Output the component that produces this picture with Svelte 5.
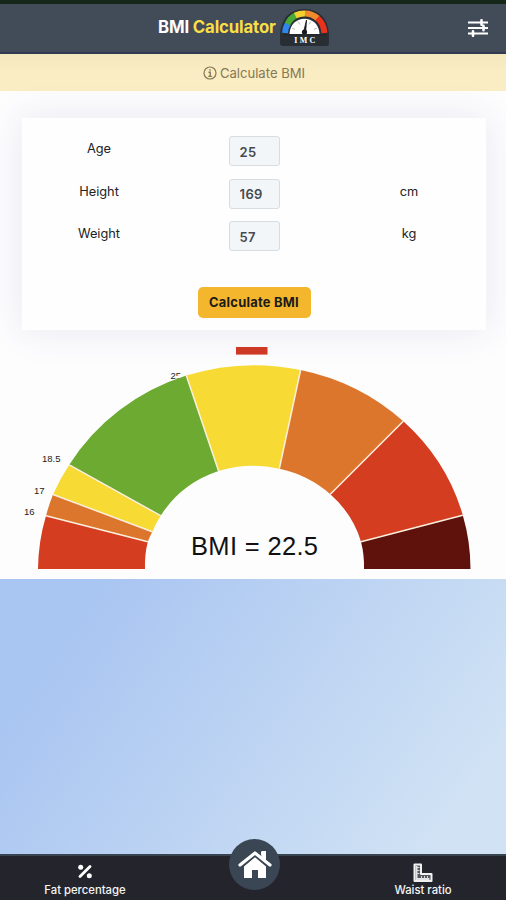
<script lang="ts">
  interface Point { x: number; y: number }
  interface Edge { outer: Point; inner: Point }

  let age = $state('25');
  let height = $state('169');
  let weight = $state('57');
  let bmi = $state('22.5');

  const colors = ['#d43d20', '#dd762d', '#f7da34', '#6daa32', '#f7da34', '#dd762d', '#d43d20', '#5f110b'];

  // Dividers between the BMI ranges, left to right.
  const edges: Edge[] = [
    [38, 229, 145, 229],
    [46, 175.7, 147.8, 201.7],
    [53, 154.5, 152.3, 191.7],
    [69.3, 124.8, 160.7, 175.7],
    [186.3, 35.6, 218.6, 131],
    [300.6, 30, 279.3, 128.8],
    [403.3, 81.3, 330.3, 154.3],
    [462.8, 175.2, 361, 201.7],
    [470.5, 229, 364, 229],
  ].map(([a, b, c, d]) => ({ outer: { x: a, y: b }, inner: { x: c, y: d } }));

  const ticks = [
    { x: 24, y: 175, text: '16' },
    { x: 34, y: 154, text: '17' },
    { x: 42, y: 122, text: '18.5' },
  ];

  function segment(a: Edge, b: Edge) {
    return `M${a.outer.x} ${a.outer.y}A216.3 204 0 0 1 ${b.outer.x} ${b.outer.y}`
      + `L${b.inner.x} ${b.inner.y}A109.5 102.7 0 0 0 ${a.inner.x} ${a.inner.y}Z`;
  }

  function calculate() {
    bmi = (Number(weight) / (Number(height) / 100) ** 2).toFixed(1);
  }
</script>

<div class="screen">
  <header>
    <h1>BMI <span>Calculator</span></h1>
    <svg class="logo" width="49" height="37" viewBox="0 0 49 37">
      <path d="M0 25Q2 1 24.5 0Q47 1 49 25V34Q49 37 46 37H3Q0 37 0 34Z" fill="#292e35" />
      <g fill="none" stroke-width="6">
        <path d="M5 24Q5.300 18.500 8 14.500" stroke="#2f86ee" />
        <path d="M7.500 15Q10.500 9 16 6.300" stroke="#4aa935" />
        <path d="M15.300 6.500Q20 4.200 25 4.400" stroke="#f5cf2d" />
        <path d="M25 4.400Q32 4.300 38 9.500" stroke="#f08a2b" />
        <path d="M37.300 9Q43.500 14 44.500 24" stroke="#e8321b" />
      </g>
      <path d="M9.500 25C10 4.500 39 4.500 39.500 25Z" fill="#fff" />
      <path d="M12 19l3 1.500M18 12.500l2 3M31 12.500l-2 3M37 19l-3 1.500" stroke="#bbb" stroke-width="1" />
      <path d="M26.500 11L23.800 22h2z" fill="#17191c" stroke="#17191c" stroke-width="0.800" />
      <circle cx="24.500" cy="23" r="2.600" fill="#17191c" />
      <rect x="3" y="25" width="43" height="2" fill="#25282d" />
      <text x="24.800" y="33.500" text-anchor="middle" textLength="21">IMC</text>
    </svg>
    <button class="settings" aria-label="Settings">
      <svg width="20" height="18" viewBox="0 0 20 18">
        <path d="M0 3.500h20M0 9h20M0 14.500h20" stroke="#fff" stroke-width="2.200" />
        <path d="M13.500 1.200v4.600M15.500 6.700v4.600M5 12.200v4.600" stroke="#fff" stroke-width="2.600" stroke-linecap="round" />
      </svg>
    </button>
  </header>

  <div class="notice">
    <svg width="14" height="14" viewBox="0 0 14 14">
      <circle cx="7" cy="7" r="6" fill="none" stroke="#857852" stroke-width="1.200" />
      <path d="M7 3.200v1.600M5.500 6.300H7.200v3.900M5.300 10.400h3.600" fill="none" stroke="#857852" stroke-width="1.400" />
    </svg>
    Calculate BMI
  </div>

  <main>
    <section class="card">
      <div class="row">
        <label for="age">Age</label>
        <input id="age" bind:value={age} />
        <span></span>
      </div>
      <div class="row">
        <label for="height">Height</label>
        <input id="height" bind:value={height} />
        <span>cm</span>
      </div>
      <div class="row">
        <label for="weight">Weight</label>
        <input id="weight" bind:value={weight} />
        <span>kg</span>
      </div>
      <button class="calculate" onclick={calculate}>Calculate BMI</button>
    </section>

    <svg class="gauge" width="506" height="238" viewBox="0 0 506 238">
      <rect x="236" y="7" width="31.500" height="7.600" fill="#cd3924" />
      {#each ticks as tick}
        <text class="tick" x={tick.x} y={tick.y}>{tick.text}</text>
      {/each}
      <text class="tick" x="170.500" y="38.500">25</text>
      <!-- Clears the lower half of the last tick, which runs under the arc. -->
      <path d="M176 36l10-3.500v6h-10z" fill="#fdfdfe" />
      {#each colors as color, i}
        <path d={segment(edges[i], edges[i + 1])} fill={color} />
      {/each}
      {#each edges.slice(1, -1) as edge}
        <line x1={edge.outer.x} y1={edge.outer.y} x2={edge.inner.x} y2={edge.inner.y} />
      {/each}
      <text class="result" x="254.500" y="214.500" text-anchor="middle" textLength="127">BMI = {bmi}</text>
    </svg>
  </main>

  <nav>
    <a href="#fat">
      <svg width="16" height="16" viewBox="0 0 16 16">
        <path d="M3 13.500L13 3.500" stroke="#fff" stroke-width="2.800" stroke-linecap="round" />
        <circle cx="3.700" cy="4.200" r="2.500" fill="#fff" />
        <circle cx="12.300" cy="12.800" r="2.500" fill="#fff" />
      </svg>
      Fat percentage
    </a>
    <a href="#waist">
      <svg width="20" height="19" viewBox="0 0 20 19">
        <path d="M1.500 1.500h6.500v9.500h10.500v7h-17z" fill="#55565c" stroke="#f1f1f1" stroke-width="2" stroke-linejoin="round" />
        <path d="M3.500 3v13h13" fill="none" stroke="#e4e4e4" stroke-width="2" />
        <path d="M4 4.500h2.500M4 7.500h2.500M4 10.500h2.500M8.500 13v3M11.500 13v3M14.500 13v3" stroke="#d8d8da" stroke-width="1" />
      </svg>
      Waist ratio
    </a>
    <a class="home" href="#home" aria-label="Home">
      <svg width="34" height="28" viewBox="0 0 34 28">
        <path d="M6 15.500L17 6l11 9.500V27h-8v-8h-6v8H6z" fill="#fff" />
        <path d="M23 1h5v11l-5-4z" fill="#fff" />
        <path d="M2 14.500L17 2.500l15 12" fill="none" stroke="#3a4653" stroke-width="5.500" />
        <path d="M2 14L17 2l15 12" fill="none" stroke="#fff" stroke-width="3.200" stroke-linecap="round" stroke-linejoin="round" />
        <path d="M23.400 0h4.600v10l-4.600-3.500z" fill="#fff" />
      </svg>
    </a>
  </nav>
</div>

<style>
  :global(body) {
    margin: 0;
  }

  .screen {
    display: flex;
    flex-direction: column;
    width: 506px;
    height: 900px;
    overflow: hidden;
    box-sizing: border-box;
    border-top: 4px solid #152719;
    font-family: Inter, "Liberation Sans", sans-serif;
    background: linear-gradient(125deg, #a9c5f1 45%, #d0e2f4 90%);
  }

  header {
    display: flex;
    align-items: center;
    box-sizing: border-box;
    flex: none;
    height: 50px;
    padding: 0 18px 2px 158px;
    background: #424b58;
    border-bottom: 2px solid #303b53;
  }
  h1 {
    margin: 0;
    width: 117px;
    font-size: 16.8px;
    font-weight: 700;
    letter-spacing: -0.15px;
    white-space: nowrap;
    color: #fff;
  }
  h1 span { color: #f8df45; }
  .logo { margin-left: 5px; }
  .logo text {
    font: 700 8px "Liberation Serif", serif;
    fill: #fff;
  }
  .settings {
    display: flex;
    margin: 2px 0 0 auto;
    padding: 0;
    border: 0;
    background: none;
  }

  .notice {
    display: flex;
    align-items: center;
    justify-content: center;
    gap: 3px;
    flex: none;
    height: 37px;
    padding-left: 2px;
    font-size: 13.1px;
    color: #857852;
    background: linear-gradient(#f4e8bf, #faecc3 50%);
  }

  main {
    flex: none;
    height: 488px;
    box-sizing: border-box;
    padding-top: 27px;
    background: #fdfdfe;
  }
  .card {
    display: flex;
    flex-direction: column;
    align-items: center;
    box-sizing: border-box;
    height: 212px;
    margin: 0 20px 0 22px;
    padding-top: 18px;
    background: #fefefe;
    box-shadow: 0 0 36px rgba(45, 50, 125, 0.1);
  }
  .row {
    display: grid;
    grid-template-columns: 154px 156px 154px;
    justify-items: center;
    height: 42.500px;
    font-size: 12.800px;
    line-height: 25px;
    color: #222;
  }
  input {
    box-sizing: border-box;
    width: 51px;
    height: 30px;
    padding: 1px 10px 0;
    border: 1px solid #d7dde1;
    border-radius: 3px;
    background: #f2f6f9;
    font: 600 13px Inter, sans-serif;
    letter-spacing: 0.400px;
    color: #464a4e;
  }
  .calculate {
    width: 113px;
    height: 31px;
    margin-top: 23px;
    padding: 1px 0 0;
    border: 0;
    border-radius: 5px;
    background: #f4b62d;
    font: 700 12.900px Inter, sans-serif;
    letter-spacing: 0.250px;
    color: #1b1b1a;
  }

  .gauge {
    display: block;
    position: relative;
    margin-top: 10px;
  }
  .gauge line {
    stroke: #fbefde;
    stroke-width: 1.500;
  }
  .tick {
    font: 9.500px "Liberation Sans", sans-serif;
    fill: #222;
  }
  .result {
    font: 25.500px "Liberation Sans", sans-serif;
    fill: #111;
  }

  nav {
    position: relative;
    display: flex;
    justify-content: space-between;
    box-sizing: border-box;
    height: 46px;
    margin-top: auto;
    padding: 7px 33px 0 35px;
    border-top: 2px solid #394451;
    background: #24252c;
  }
  nav a {
    display: flex;
    flex-direction: column;
    align-items: center;
    justify-content: space-between;
    width: 100px;
    height: 33px;
    font-size: 11.300px;
    line-height: 12px;
    font-weight: 500;
    color: #f5f5f5;
    text-decoration: none;
  }
  /* Sits over the top border of the bar. */
  nav .home {
    position: absolute;
    top: -17px;
    left: 229px;
    justify-content: center;
    width: 51px;
    height: 51px;
    border-radius: 50%;
    background: #3a4653;
  }
</style>
